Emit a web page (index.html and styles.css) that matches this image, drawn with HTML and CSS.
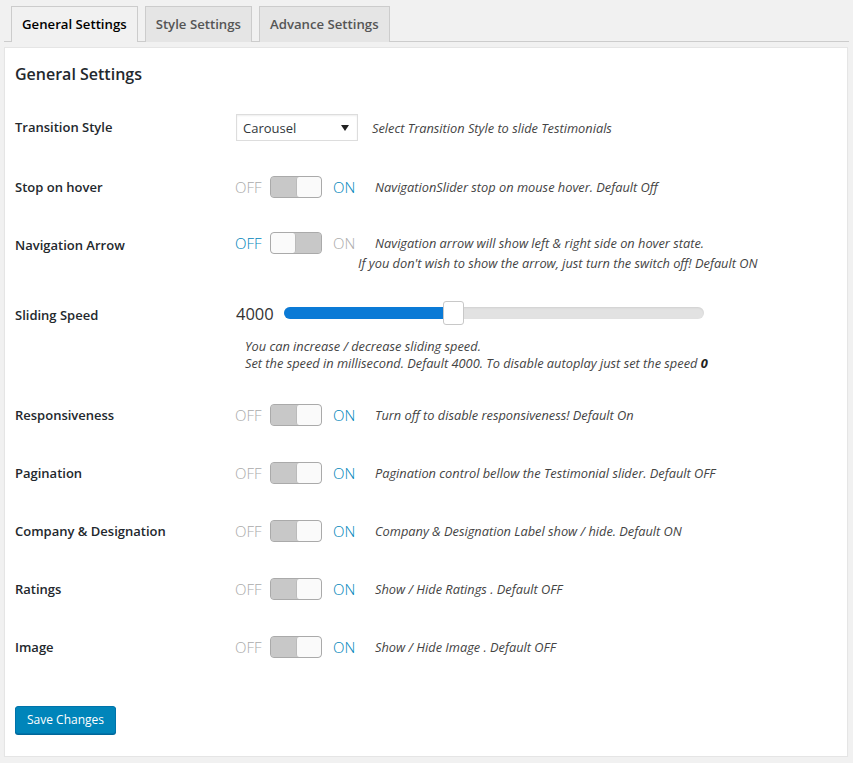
FILE: index.html
```html
<!DOCTYPE html>
<html>
<head>
<meta charset="utf-8">
<link rel="stylesheet" href="styles.css">
</head>
<body>
<div class="wrap">
  <nav class="tabs">
    <a class="tab active">General Settings</a>
    <a class="tab">Style Settings</a>
    <a class="tab">Advance Settings</a>
  </nav>
  <div class="panel">
    <h2 class="title">General Settings</h2>

    <div class="row r-select">
      <div class="label">Transition Style</div>
      <div class="ctrl">
        <div class="select">
          <span>Carousel</span>
          <svg class="caret" width="8" height="6" viewBox="0 0 8 6"><path d="M0 0h8L4 6z" fill="#222"/></svg>
        </div>
        <span class="desc sel-desc">Select Transition Style to slide Testimonials</span>
      </div>
    </div>

    <div class="row r-toggle r-first">
      <div class="label">Stop on hover</div>
      <div class="ctrl">
        <span class="off">OFF</span>
        <span class="switch"><span class="track"></span><span class="knob"></span></span>
        <span class="on active-label">ON</span>
        <span class="desc">NavigationSlider stop on mouse hover. Default Off</span>
      </div>
    </div>

    <div class="row r-nav">
      <div class="label shifted">Navigation Arrow</div>
      <div class="ctrl ctrl-top">
        <span class="off active-label">OFF</span>
        <span class="switch switch-off"><span class="knob"></span><span class="track"></span></span>
        <span class="on">ON</span>
        <span class="desc desc-multi">Navigation arrow will show left &amp; right side on hover state.<br>If you don't wish to show the arrow, just turn the switch off! Default ON</span>
      </div>
    </div>

    <div class="row r-slider">
      <div class="label shifted">Sliding Speed</div>
      <div class="ctrl-col">
        <div class="slider-line">
          <span class="value">4000</span>
          <div class="range">
            <div class="fill" style="width:40.5%"></div>
            <div class="handle" style="left:40.5%"></div>
          </div>
        </div>
        <div class="desc slider-desc">You can increase / decrease sliding speed.<br>Set the speed in millisecond. Default 4000. To disable autoplay just set the speed <b>0</b></div>
      </div>
    </div>

    <div class="row r-toggle">
      <div class="label">Responsiveness</div>
      <div class="ctrl">
        <span class="off">OFF</span>
        <span class="switch"><span class="track"></span><span class="knob"></span></span>
        <span class="on active-label">ON</span>
        <span class="desc">Turn off to disable responsiveness! Default On</span>
      </div>
    </div>

    <div class="row r-toggle">
      <div class="label">Pagination</div>
      <div class="ctrl">
        <span class="off">OFF</span>
        <span class="switch"><span class="track"></span><span class="knob"></span></span>
        <span class="on active-label">ON</span>
        <span class="desc">Pagination control bellow the Testimonial slider. Default OFF</span>
      </div>
    </div>

    <div class="row r-toggle">
      <div class="label">Company &amp; Designation</div>
      <div class="ctrl">
        <span class="off">OFF</span>
        <span class="switch"><span class="track"></span><span class="knob"></span></span>
        <span class="on active-label">ON</span>
        <span class="desc">Company &amp; Designation Label show / hide. Default ON</span>
      </div>
    </div>

    <div class="row r-toggle">
      <div class="label">Ratings</div>
      <div class="ctrl">
        <span class="off">OFF</span>
        <span class="switch"><span class="track"></span><span class="knob"></span></span>
        <span class="on active-label">ON</span>
        <span class="desc">Show / Hide Ratings . Default OFF</span>
      </div>
    </div>

    <div class="row r-toggle">
      <div class="label">Image</div>
      <div class="ctrl">
        <span class="off">OFF</span>
        <span class="switch"><span class="track"></span><span class="knob"></span></span>
        <span class="on active-label">ON</span>
        <span class="desc">Show / Hide Image . Default OFF</span>
      </div>
    </div>

    <button class="save">Save Changes</button>
  </div>
</div>
</body>
</html>
```

FILE: styles.css
```css
* { box-sizing: border-box; }
body {
  margin: 0;
  background: #f1f1f1;
  font-family: "Open Sans", "Noto Sans", sans-serif;
  color: #23282d;
}
.wrap {
  padding: 6px 4px 0 4px;
}
.tabs {
  display: flex;
  gap: 7px;
  padding-left: 7px;
  height: 36px;
  border-bottom: 1px solid #ccc;
}
.tab {
  display: block;
  height: 36px;
  padding: 5px 10px;
  line-height: 24px;
  font-size: 13.2px;
  font-weight: 600;
  color: #555;
  background: #e5e5e5;
  border: 1px solid #ccc;
  border-bottom: none;
  white-space: nowrap;
}
.tab.active {
  background: #f1f1f1;
  color: #000;
}
.panel {
  margin-top: 5px;
  margin-right: 1px;
  background: #fff;
  border: 1px solid #e5e5e5;
  box-shadow: 0 1px 1px rgba(0,0,0,.04);
  padding: 0 10px 22px 10px;
}
.title {
  margin: 14px 0 28px 0;
  font-size: 16px;
  font-weight: 600;
  line-height: 24px;
  color: #23282d;
}
.row {
  display: flex;
  align-items: flex-start;
}
.r-select { height: 62px; }
.r-toggle { height: 58px; }
.r-toggle.r-first { height: 56px; }
.r-nav { height: 70px; }
.r-slider { height: 102px; }
.label {
  width: 221px;
  flex: none;
  font-size: 13px;
  font-weight: 600;
  line-height: 22px;
  color: #23282d;
}
.r-select .label { line-height: 27px; }
.label.shifted { padding-top: 2px; }
.ctrl {
  display: flex;
  align-items: center;
  height: 22px;
}
.r-select .ctrl { height: 27px; }
.ctrl-top { align-items: flex-start; height: auto; }
.select {
  width: 122px;
  height: 27px;
  border: 1px solid #ddd;
  box-shadow: inset 0 1px 2px rgba(0,0,0,.07);
  display: flex;
  align-items: center;
  justify-content: space-between;
  padding: 0 8px 0 6px;
  font-size: 13px;
  color: #32373c;
}
.caret { display: block; }
.desc {
  font-size: 12.8px;
  font-style: italic;
  color: #444;
  white-space: nowrap;
}
.sel-desc { margin-left: 14px; }
.off, .on {
  font-size: 15px;
  line-height: 22px;
  color: #aaa;
  font-weight: 300;
}
.off { width: 35px; margin-left: -1px; }
.on { width: 25px; margin-left: 11px; }
.active-label { color: #0085ba; }
.switch {
  display: flex;
  width: 52px;
  height: 22px;
  border: 1px solid #aaa;
  border-radius: 4px;
  overflow: hidden;
  background: #c8c8c8;
}
.switch .track { width: 25px; background: #c8c8c8; }
.switch .knob {
  flex: 1;
  background: #fafafa;
  border-left: 1px solid #bbb;
  border-radius: 3px;
}
.switch-off .knob { border-left: none; border-right: 1px solid #bbb; }
.ctrl .desc { padding-left: 17px; }
.ctrl .sel-desc { padding-left: 0; }
.desc-multi {
  padding-left: 0 !important;
  text-indent: 17px;
  line-height: 20px;
  margin-top: 1px;
}
.ctrl-top .off, .ctrl-top .on { height: 22px; }
.ctrl-col { display: flex; flex-direction: column; }
.slider-line {
  display: flex;
  align-items: center;
  height: 22px;
}
.value {
  width: 48px;
  font-size: 16.5px;
  color: #333;
  font-weight: 400;
}
.range {
  position: relative;
  width: 420px;
  height: 12px;
  border-radius: 6px;
  background: #e2e2e2;
  box-shadow: inset 0 1px 2px rgba(0,0,0,.08);
}
.fill {
  height: 12px;
  border-radius: 6px 0 0 6px;
  background: #0a7ad6;
}
.handle {
  position: absolute;
  top: -6px;
  width: 21px;
  height: 24px;
  margin-left: -11px;
  background: #fff;
  border: 1px solid #c8c8c8;
  border-radius: 3px;
}
.slider-desc {
  margin-top: 14px;
  padding-left: 9px;
  line-height: 17px;
}
.slider-desc b { font-weight: 700; color: #222; }
.save {
  display: block;
  margin-top: 12px;
  height: 28px;
  padding: 0 11px;
  line-height: 26px;
  font-family: "Open Sans", "Noto Sans", sans-serif;
  font-size: 12px;
  color: #fff;
  background: #0085ba;
  border: 1px solid #0073aa;
  border-radius: 3px;
  box-shadow: 0 1px 0 #006799;
  cursor: pointer;
}
```
